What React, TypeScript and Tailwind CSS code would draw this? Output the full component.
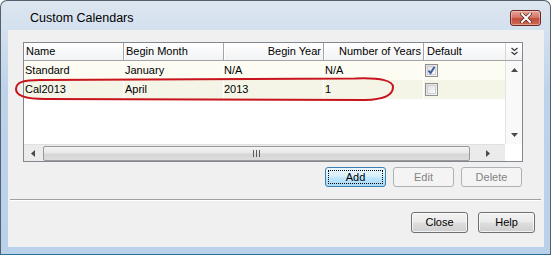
import React from "react";

function Check({ checked }: { checked: boolean }) {
  return (
    <div className="w-[13px] h-[13px] border border-[#8e8f8f] bg-[linear-gradient(135deg,#dcdcdc,#f8f8f8)] flex items-center justify-center">
      <div className="w-[9px] h-[9px] bg-[linear-gradient(135deg,#e0e0e0,#fafafa)] border border-[#d0d0d0] relative">
        {checked && (
          <svg width="11" height="11" viewBox="0 0 11 11" className="absolute left-[-2px] top-[-2px]">
            <path d="M2.5 5.5 L4.5 8 L8.5 2" stroke="#3c5ba0" strokeWidth="2" fill="none" />
          </svg>
        )}
      </div>
    </div>
  );
}

function Row({ a, b, c, d, checked, bg }: { a: string; b: string; c: string; d: string; checked: boolean; bg: string }) {
  return (
    <div className={`flex h-[19px] items-center ${bg}`}>
      <div className="w-[100px] pl-[1px] border-r border-white h-full flex items-center">{a}</div>
      <div className="w-[100px] pl-[1px] border-r border-white h-full flex items-center">{b}</div>
      <div className="w-[100px] pl-[0px] border-r border-white h-full flex items-center">{c}</div>
      <div className="w-[100px] pl-[1px] border-r border-white h-full flex items-center">{d}</div>
      <div className="w-[81px] pl-[1px] h-full flex items-center">
        <Check checked={checked} />
      </div>
    </div>
  );
}

function HeaderCell({ label, w, right }: { label: string; w: string; right?: boolean }) {
  return (
    <div
      className={`${w} h-full flex items-center border-r border-[#a5a5a5] border-l border-l-white ${right ? "justify-end pr-[2px]" : "pl-[1px]"}`}
    >
      {label}
    </div>
  );
}

export default function App() {
  return (
    <div className="w-[551px] h-[255px] bg-white relative font-['Liberation_Sans',Arial,sans-serif] text-black">
      <div className="w-full h-full flex flex-col rounded-t-[7px] border border-[#55606c] border-b-[#2d6f8f] bg-[linear-gradient(180deg,#dde6f0_0px,#d3e0ee_30px,#bdd3ea_90px,#b9d1ea_255px)]">
        {/* title bar */}
        <div className="h-[29px] flex items-start shrink-0">
          <div className="ml-[29px] mt-[10px] text-[12.5px] leading-[15px]">Custom Calendars</div>
          <div className="ml-auto mr-[9px] mt-[9px] w-[31px] h-[16px] rounded-[3px] border border-[#6a2a22] bg-[linear-gradient(180deg,#e6a497_0%,#d6786a_45%,#c14b3a_55%,#cf6a55_100%)] flex items-center justify-center shadow-[inset_0_0_0_1px_rgba(255,255,255,0.35)]">
            <svg width="12" height="10" viewBox="0 0 12 10">
              <path d="M2 1 L10 9 M10 1 L2 9" stroke="#5a2a22" strokeWidth="3.4" strokeLinecap="square" />
              <path d="M2 1 L10 9 M10 1 L2 9" stroke="#ffffff" strokeWidth="2" strokeLinecap="square" />
            </svg>
          </div>
        </div>
        {/* client */}
        <div className="ml-[7px] mr-[6px] mb-[7px] flex-1 bg-[#f0f0f0] flex flex-col text-[11px]">
          {/* grid */}
          <div className="mt-[12px] ml-[15px] w-[500px] h-[120px] border border-[#828790] bg-white flex flex-col">
            {/* header */}
            <div className="h-[18px] flex bg-[linear-gradient(180deg,#ffffff,#f1f2f4)] border-b border-[#a5a5a5] shrink-0">
              <HeaderCell label="Name" w="w-[100px]" />
              <HeaderCell label="Begin Month" w="w-[100px]" />
              <HeaderCell label="Begin Year" w="w-[100px]" right />
              <HeaderCell label="Number of Years" w="w-[100px]" right />
              <div className="w-[81px] h-full flex items-center pl-[2px] border-l border-l-white">Default</div>
              <div className="w-[17px] h-full flex items-center justify-center border-l border-[#d5d5d5]">
                <svg width="9" height="9" viewBox="0 0 9 9">
                  <path d="M1.5 1 L4.5 3.5 L7.5 1 M1.5 5 L4.5 7.5 L7.5 5" stroke="#333" strokeWidth="1.2" fill="none" />
                </svg>
              </div>
            </div>
            {/* body */}
            <div className="flex h-[83px]">
              <div className="w-[481px] flex flex-col">
                <Row a="Standard" b="January" c="N/A" d="N/A" checked bg="bg-[#fcfcf2]" />
                <Row a="Cal2013" b="April" c="2013" d="1" checked={false} bg="bg-[#f5f5e7]" />
              </div>
              <div className="w-[17px] bg-[#f9f9f9] border-l border-[#e4e4e4] flex flex-col items-center justify-between py-[7px]">
                <svg width="7" height="4" viewBox="0 0 7 4">
                  <path d="M0 4 L3.5 0 L7 4 Z" fill="#4a4a4a" />
                </svg>
                <svg width="7" height="4" viewBox="0 0 7 4">
                  <path d="M0 0 L3.5 4 L7 0 Z" fill="#4a4a4a" />
                </svg>
              </div>
            </div>
            {/* horizontal scrollbar */}
            <div className="flex h-[17px]">
              <div className="w-[481px] flex items-center bg-[#ebebeb] border-t border-[#e0e0e0]">
                <div className="w-[18px] h-full flex items-center justify-center">
                  <svg width="4" height="7" viewBox="0 0 4 7">
                    <path d="M4 0 L0 3.5 L4 7 Z" fill="#4a4a4a" />
                  </svg>
                </div>
                <div className="ml-[1px] w-[427px] h-[15px] rounded-[2px] border border-[#9a9a9a] bg-[linear-gradient(180deg,#f3f3f3_0%,#e8e8e8_45%,#d6d6d6_55%,#dcdcdc_100%)] flex items-center justify-center">
                  <div className="flex gap-[2px]">
                    <div className="w-[1px] h-[7px] bg-[#5a5a5a]" />
                    <div className="w-[1px] h-[7px] bg-[#5a5a5a]" />
                    <div className="w-[1px] h-[7px] bg-[#5a5a5a]" />
                  </div>
                </div>
                <div className="flex-1 h-full flex items-center justify-center">
                  <svg width="4" height="7" viewBox="0 0 4 7">
                    <path d="M0 0 L4 3.5 L0 7 Z" fill="#4a4a4a" />
                  </svg>
                </div>
              </div>
              <div className="w-[17px] bg-white" />
            </div>
          </div>
          {/* action buttons */}
          <div className="mt-[5px] h-[20px] flex justify-end pr-[22px] gap-[7px]">
            <div className="w-[61px] h-[20px] rounded-[3px] border border-[#3c7fb1] bg-[linear-gradient(180deg,#eaf6fd_0%,#d9f0fc_45%,#bee6fd_55%,#a7d9f5_100%)] p-[2px]">
              <div className="w-full h-full border border-dotted border-black flex items-center justify-center">Add</div>
            </div>
            <div className="w-[61px] h-[20px] rounded-[3px] border border-[#adb2b5] bg-[#f4f4f4] flex items-center justify-center text-[#838383]">Edit</div>
            <div className="w-[61px] h-[20px] rounded-[3px] border border-[#adb2b5] bg-[#f4f4f4] flex items-center justify-center text-[#838383]">Delete</div>
          </div>
          {/* separator */}
          <div className="mt-[12px] ml-[2px] mr-[3px] h-[2px] border-t border-[#a0a0a0] border-b border-b-white" />
          {/* bottom buttons */}
          <div className="mt-[11px] flex justify-end pr-[9px] gap-[10px]">
            <div className="w-[57px] h-[21px] rounded-[3px] border border-[#707070] bg-[linear-gradient(180deg,#f2f2f2_0%,#ebebeb_45%,#dddddd_55%,#cfcfcf_100%)] shadow-[inset_0_0_0_1px_rgba(255,255,255,0.7)] flex items-center justify-center">Close</div>
            <div className="w-[57px] h-[21px] rounded-[3px] border border-[#707070] bg-[linear-gradient(180deg,#f2f2f2_0%,#ebebeb_45%,#dddddd_55%,#cfcfcf_100%)] shadow-[inset_0_0_0_1px_rgba(255,255,255,0.7)] flex items-center justify-center">Help</div>
          </div>
        </div>
      </div>
      {/* red annotation ellipse */}
      <svg className="absolute left-0 top-0 pointer-events-none" width="551" height="255" viewBox="0 0 551 255">
        <path
          d="M16 89 C16 82 24 80 40 80 L355 78.5 C382 77.5 393 81 393 87 C393 94 386 99.5 365 100 L45 99 C24 99 16 95 16 89 Z"
          stroke="#c8141c"
          strokeWidth="2"
          fill="none"
        />
      </svg>
    </div>
  );
}
